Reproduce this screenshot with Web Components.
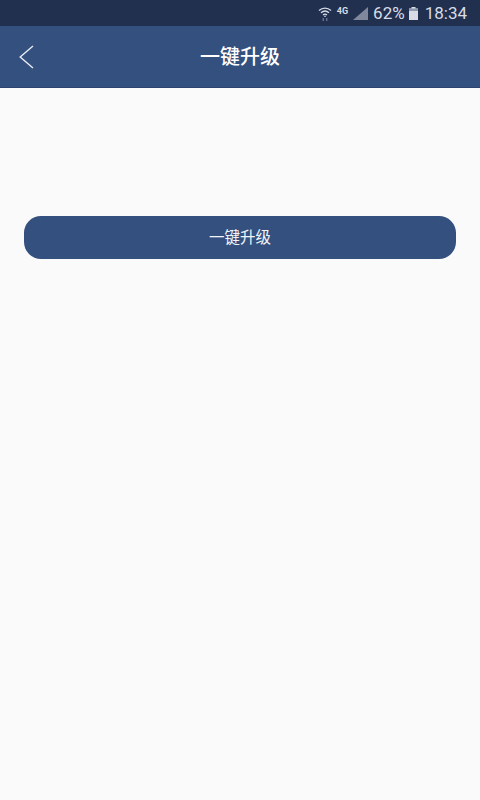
<!DOCTYPE html>
<html lang="zh"><head><meta charset="utf-8"><style>
html,body{margin:0;padding:0;height:100%;background:#fafafa}
body{font-family:"Noto Sans CJK SC","Roboto",sans-serif}
app-screen{height:800px}
</style></head><body>
<template id="t-status"><style>
:host{display:flex;align-items:center;justify-content:flex-end;height:26px;background:#22304f;color:#d7dce6;font:17px Roboto,sans-serif;padding-right:13px;box-sizing:border-box}
svg{display:block}
.g{font:bold 9px Roboto,sans-serif;margin:0 5px 5px 5px;letter-spacing:0}
.p{margin-left:5px}.b{margin:0 7px 0 4px}
</style><svg width="14" height="15" viewBox="0 0 14 15" fill="none" stroke="#d7dce6" stroke-width="1.3"><path d="M1 4.5C4.5 1.2 9.5 1.2 13 4.5"/><path d="M3 6.8C5.4 4.7 8.6 4.7 11 6.8"/><path d="M5 9C6.2 8 7.8 8 9 9"/><path d="M7 9.8v1" stroke-width="1.8"/><path d="M5.2 12v3M8.8 12v3" stroke-width=".9" stroke="#8f99ad"/></svg><span class="g">4G</span><svg width="15" height="13" viewBox="0 0 15 13"><path d="M15 0V13H0Z" fill="#7f889c"/></svg><span class="p">62%</span><svg class="b" width="9" height="13" viewBox="0 0 9 13"><path d="M2.5 0h4v1.5H9V13H0V1.5h2.5Z" fill="#d7dce6"/><path d="M0 1.5h9V4H0Z" fill="#8f99ad"/></svg><span>18:34</span></template>

<template id="t-bar"><style>
:host{display:grid;grid-template-columns:1fr auto 1fr;align-items:center;height:62px;background:#34507f;border-bottom:1px solid #2c4570;box-sizing:border-box;color:#fff}
.back{padding-left:19px;display:flex}
.t{font:500 20px/1 "Noto Sans CJK SC",sans-serif;position:relative;top:-1px}
svg{display:block}
</style><div class="back"><svg width="15" height="24" viewBox="0 0 15 24" fill="none" stroke="#e8ecf3" stroke-width="1.4"><path d="M14 1 1.2 12 14 23"/></svg></div><div class="t"><slot></slot></div><div></div></template>

<template id="t-btn"><style>
:host{display:flex;align-items:center;justify-content:center;height:43px;background:#34507f;border-radius:17px;color:#f2f4f8;font:15.5px/1 "Noto Sans CJK SC",sans-serif}
span{position:relative;top:-1px}
</style><span><slot></slot></span></template>

<template id="t-screen"><style>
:host{display:flex;flex-direction:column;background:#fafafa}
main{padding:128px 24px 0}
</style><slot name="head"></slot><main><slot></slot></main></template>

<app-screen>
<status-bar slot="head"></status-bar>
<nav-bar slot="head">一键升级</nav-bar>
<action-button>一键升级</action-button>
</app-screen>
<script>
const def=(n,id)=>customElements.define(n,class extends HTMLElement{constructor(){super();this.attachShadow({mode:'open'}).appendChild(document.getElementById(id).content.cloneNode(true))}});
def('status-bar','t-status');def('nav-bar','t-bar');def('action-button','t-btn');def('app-screen','t-screen');
</script>
</body></html>
